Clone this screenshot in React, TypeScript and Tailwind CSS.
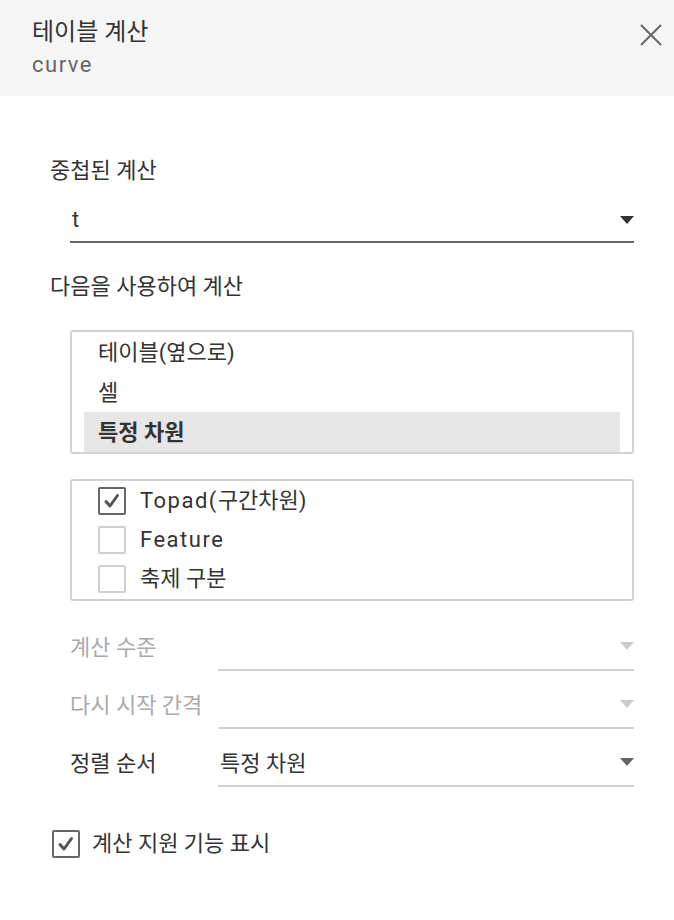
import React from "react";

const FONT = { fontFamily: 'Roboto, "Noto Sans CJK KR", sans-serif' };

function L({ children }: { children: React.ReactNode }) {
  return <span className="tracking-[1.5px]">{children}</span>;
}

function Arrow({ color }: { color: string }) {
  return (
    <svg width="14" height="8" viewBox="0 0 14 8" className="shrink-0">
      <path d="M0 0 L14 0 L7 8 Z" fill={color} />
    </svg>
  );
}

function Check({ checked, strong }: { checked: boolean; strong?: boolean }) {
  return (
    <div
      className={
        "w-[28px] h-[28px] shrink-0 border-2 rounded-[2px] flex items-center justify-center bg-white " +
        (checked || strong ? "border-[#666666]" : "border-[#d0d0d0]")
      }
    >
      {checked && (
        <svg width="24" height="24" viewBox="0 0 24 24">
          <path d="M6 12.5 L10 17 L17.5 6.5" fill="none" stroke="#555" strokeWidth="3" strokeLinecap="round" strokeLinejoin="round" />
        </svg>
      )}
    </div>
  );
}

function FieldRow({ label, value, disabled }: { label: string; value?: string; disabled?: boolean }) {
  return (
    <div className="flex pl-[20px] items-start">
      <div className={"w-[148px] pt-[8px] leading-[28px] " + (disabled ? "text-[#aaaaaa]" : "text-[#333333]")}>{label}</div>
      <div className="flex-1 flex items-center justify-between pt-[8px] pb-[7px] border-b-2 border-[#d2d2d2]">
        <span className="leading-[28px] h-[28px] pl-[2px] text-[#333333]">{value ?? ""}</span>
        <div className="-mt-[4px]">
          <Arrow color={disabled ? "#cccccc" : "#666666"} />
        </div>
      </div>
    </div>
  );
}

export default function App() {
  return (
    <div className="w-[674px] h-[920px] bg-white text-[22px] text-[#333333]" style={FONT}>
      <div className="h-[96px] bg-[#f5f5f5] flex justify-between pl-[32px] pr-[12px]">
        <div className="pt-[18px]">
          <div className="leading-[28px] text-[24px] text-[#333333]">테이블 계산</div>
          <div className="leading-[28px] mt-[5px] text-[#666666]">
            <L>curve</L>
          </div>
        </div>
        <div className="pt-[24px]">
          <svg width="22" height="22" viewBox="0 0 22 22">
            <path d="M1 1 L21 21 M21 1 L1 21" stroke="#666" strokeWidth="2" />
          </svg>
        </div>
      </div>

      <div className="pl-[50px] pr-[40px]">
        <div className="mt-[61px] leading-[28px]">중첩된 계산</div>
        <div className="ml-[20px] mt-[15px] flex items-center justify-between pt-[6px] pb-[7px] border-b-2 border-[#666666]">
          <span className="leading-[28px] pl-[2px]">t</span>
          <Arrow color="#333333" />
        </div>

        <div className="mt-[30px] leading-[28px]">다음을 사용하여 계산</div>

        <div className="ml-[20px] mt-[29px] border-2 border-[#d2d2d2] rounded-[3px] px-[12px]">
          <div className="h-[40px] flex items-center pl-[14px]">테이블(옆으로)</div>
          <div className="h-[40px] flex items-center pl-[14px]">셀</div>
          <div className="h-[40px] flex items-center pl-[14px] bg-[#e6e6e6] font-bold">특정 차원</div>
        </div>

        <div className="ml-[20px] mt-[25px] border-2 border-[#d2d2d2] rounded-[3px] pl-[26px] pb-[1px]">
          <div className="h-[39px] flex items-center gap-[14px]">
            <Check checked />
            <span>
              <L>Topad(</L>구간차원)
            </span>
          </div>
          <div className="h-[39px] flex items-center gap-[14px]">
            <Check checked={false} />
            <L>Feature</L>
          </div>
          <div className="h-[39px] flex items-center gap-[14px]">
            <Check checked={false} />
            <span>축제 구분</span>
          </div>
        </div>

        <div className="mt-[25px]">
          <FieldRow label="계산 수준" disabled />
        </div>
        <div className="mt-[13px]">
          <FieldRow label="다시 시작 간격" disabled />
        </div>
        <div className="mt-[13px]">
          <FieldRow label="정렬 순서" value="특정 차원" />
        </div>

        <div className="mt-[43px] ml-[2px] flex items-center gap-[12px]">
          <Check checked strong />
          <span className="leading-[28px]">계산 지원 기능 표시</span>
        </div>
      </div>
    </div>
  );
}
